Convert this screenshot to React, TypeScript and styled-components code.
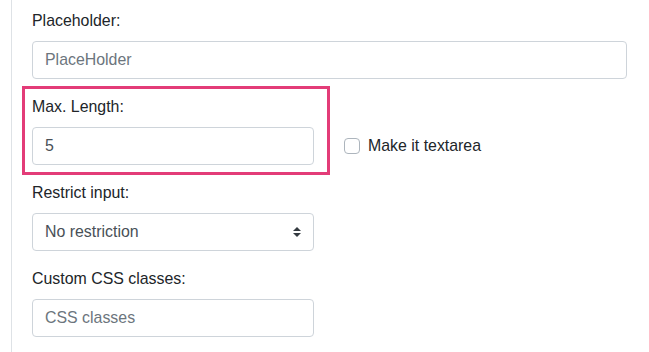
import styled, { createGlobalStyle } from 'styled-components';

const GlobalStyle = createGlobalStyle`
  html, body {
    margin: 0;
    padding: 0;
    background: #fff;
    overflow: hidden;
  }
  body {
    font-family: 'Liberation Sans', Arial, sans-serif;
    font-size: 15.9px;
    color: #212529;
  }
`;

const Panel = styled.div`
  margin-left: 11px;
  border-left: 1px solid #dee2e6;
  padding: 9px 0 0 20px;
  width: 595px;
  min-height: 100vh;
  box-sizing: content-box;
`;

const FormGroup = styled.div<{ $last?: boolean }>`
  margin-bottom: ${({ $last }) => ($last ? '0' : '16px')};
`;

const Highlight = styled.div`
  margin: -9px -16px 6px -10px;
  padding: 6px 13px 7px 7px;
  border: 3px solid #e33c78;
`;

const Label = styled.label`
  display: block;
  height: 24px;
  line-height: 24px;
  margin-bottom: 8px;
  color: #212529;
`;

const Input = styled.input<{ $width?: number }>`
  display: block;
  box-sizing: border-box;
  width: ${({ $width }) => ($width ? `${$width}px` : '100%')};
  height: 38px;
  padding: 6px 12px;
  border: 1px solid #ced4da;
  border-radius: 4px;
  font-family: inherit;
  font-size: 15.9px;
  color: #495057;
  background: #fff;
  outline: none;

  &::placeholder {
    color: #6c757d;
    opacity: 1;
  }
`;

const Row = styled.div`
  display: flex;
  gap: 30px;
`;

const LeftCol = styled.div`
  width: 282px;
  flex: none;
`;

const RightCol = styled.div`
  flex: 1;
  padding-top: 32px;
`;

const CheckRow = styled.label`
  display: flex;
  align-items: center;
  height: 38px;
  gap: 8px;
  cursor: pointer;
`;

const CheckBox = styled.span`
  width: 16px;
  height: 16px;
  box-sizing: border-box;
  border: 1px solid #adb5bd;
  border-radius: 4px;
  background: #fff;
  flex: none;
`;

const CheckText = styled.span`
  line-height: 24px;
  color: #212529;
`;

const Select = styled.div`
  display: flex;
  align-items: center;
  justify-content: space-between;
  box-sizing: border-box;
  width: 282px;
  height: 38px;
  padding: 0 12px;
  border: 1px solid #ced4da;
  border-radius: 4px;
  color: #495057;
  background: #fff;
  cursor: pointer;
`;

function SortArrows() {
  return (
    <svg width="8" height="10" viewBox="0 0 4 5" aria-hidden="true">
      <path fill="#343a40" d="M2 0L0 2h4zm0 5L0 3h4z" />
    </svg>
  );
}

export default function App() {
  return (
    <>
      <GlobalStyle />
      <Panel>
        <FormGroup>
          <Label>Placeholder:</Label>
          <Input placeholder="PlaceHolder" />
        </FormGroup>

        <Row>
          <LeftCol>
            <Highlight>
              <Label>Max. Length:</Label>
              <Input defaultValue="5" />
            </Highlight>
          </LeftCol>
          <RightCol>
            <CheckRow>
              <CheckBox />
              <CheckText>Make it textarea</CheckText>
            </CheckRow>
          </RightCol>
        </Row>

        <FormGroup>
          <Label>Restrict input:</Label>
          <Select>
            <span>No restriction</span>
            <SortArrows />
          </Select>
        </FormGroup>

        <FormGroup $last>
          <Label>Custom CSS classes:</Label>
          <Input $width={282} placeholder="CSS classes" />
        </FormGroup>
      </Panel>
    </>
  );
}
